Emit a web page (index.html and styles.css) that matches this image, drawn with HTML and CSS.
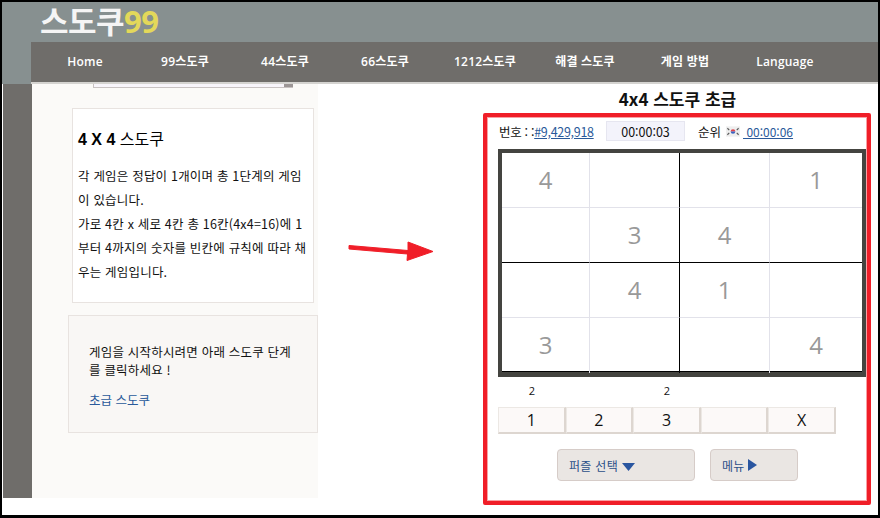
FILE: index.html
```html
<!DOCTYPE html>
<html lang="ko">
<head>
  <meta charset="UTF-8" />
  <title>4x4 스도쿠 초급</title>
  <link rel="stylesheet" href="styles.css">
</head>
<body>
  <div class="frame">
    <header>
      <div class="logo">스도쿠<span>99</span></div>
    </header>
    <nav>
      <a href="#">Home</a>
      <a href="#">99스도쿠</a>
      <a href="#">44스도쿠</a>
      <a href="#">66스도쿠</a>
      <a href="#">1212스도쿠</a>
      <a href="#">해결 스도쿠</a>
      <a href="#">게임 방법</a>
      <a href="#">Language</a>
    </nav>

    <div class="page">
      <div class="gutter"></div>

      <!-- Left panel -->
      <aside class="panel">
        <div class="search-stub"><i></i></div>
        <div class="intro">
          <h3><b>4 X 4</b> 스도쿠</h3>
          <p>각 게임은 정답이 1개이며 총 1단계의 게임이 있습니다.<br>가로 4칸 x 세로 4칸 총 16칸(4x4=16)에 1부터 4까지의 숫자를 빈칸에 규칙에 따라 채우는 게임입니다.</p>
        </div>
        <div class="start">
          <p>게임을 시작하시려면 아래 스도쿠 단계를 클릭하세요 !</p>
          <a href="#">초급 스도쿠</a>
        </div>
      </aside>

      <!-- Game -->
      <main class="game">
        <h2>4x4 스도쿠 초급</h2>
        <div class="game-box">
          <div class="info">
            <span class="num">번호 : :<a href="#">#9,429,918</a></span>
            <span class="timer">00:00:03</span>
            <span class="rank">순위
              <svg class="flag" width="14" height="11" viewBox="0 0 15 11">
                <rect width="15" height="11" fill="#eeeeee"/>
                <path d="M5 5.500a2.500 2.500 0 0 1 5 0z" fill="#e0404a"/>
                <path d="M5 5.500a2.500 2.500 0 0 0 5 0z" fill="#3a62c0"/>
                <path d="M1.500 2l2 2M1.500 9l2-2M13.500 2l-2 2M13.500 9l-2-2" stroke="#555" stroke-width="1.200"/>
              </svg><a href="#">&nbsp;00:00:06</a></span>
          </div>

          <div class="board">
            <div class="cell">4</div><div class="cell mid"></div><div class="cell"></div><div class="cell">1</div>
            <div class="cell row2"></div><div class="cell mid row2">3</div><div class="cell row2">4</div><div class="cell row2"></div>
            <div class="cell"></div><div class="cell mid">4</div><div class="cell">1</div><div class="cell"></div>
            <div class="cell row2">3</div><div class="cell mid row2"></div><div class="cell row2"></div><div class="cell row2">4</div>
          </div>

          <div class="hints">
            <span>2</span><span></span><span>2</span><span></span><span></span>
          </div>
          <div class="pad">
            <button>1</button><button>2</button><button>3</button><button></button><button>X</button>
          </div>

          <div class="actions">
            <button class="puzzle">퍼즐 선택 <svg width="13" height="9" viewBox="0 0 13 9"><path d="M0 1h13L6.500 9z" fill="#2a56a0"/></svg></button>
            <button class="menu">메뉴 <svg width="9" height="12" viewBox="0 0 9 12"><path d="M0 0l9 6-9 6z" fill="#2a56a0"/></svg></button>
          </div>
        </div>
      </main>
    </div>

    <!-- Annotation arrow -->
    <svg class="arrow" width="90" height="24" viewBox="0 0 90 24">
      <path d="M1 5.500L60 10.500L60 2L85 11.500L59 20.500L59.500 14L1 9z" fill="#f01e28" stroke="#f01e28" stroke-linejoin="round"/>
    </svg>
  </div>
</body>
</html>
```

FILE: styles.css
```css
* {
  box-sizing: border-box;
}
body {
  margin: 0;
  background: #fff;
  font-family: "Noto Sans CJK KR", "Open Sans", sans-serif;
  font-size: 12.5px;
  color: #111;
}
a {
  color: #2a5a9a;
}
.frame {
  position: relative;
  width: 880px;
  height: 518px;
  overflow: hidden;
  border-style: solid;
  border-color: #000;
  border-width: 2px 2px 3px 2px;
}
header {
  height: 40px;
  background: #879090;
  padding-left: 38px;
}
.logo {
  font-family: "Open Sans", "Noto Sans CJK KR", sans-serif;
  font-size: 31px;
  font-weight: 700;
  line-height: 38px;
  color: #f5f5f5;
  letter-spacing: -0.5px;
}
.logo span {
  color: #e3d85a;
}
nav {
  display: flex;
  height: 42px;
  margin-left: 29px;
  padding-left: 4px;
  background: #6f6d6a;
  border-bottom: 2px solid #d4d3d0;
  position: relative;
}
nav::before {
  content: "";
  position: absolute;
  left: -29px;
  top: 0;
  width: 29px;
  height: 42px;
  background: #879090;
}
nav a {
  width: 100px;
  line-height: 40px;
  text-align: center;
  color: #fff;
  font-family: "Open Sans", "Noto Sans CJK KR", sans-serif;
  font-size: 12px;
  font-weight: 600;
  letter-spacing: 0.2px;
  text-decoration: none;
}
.page {
  display: flex;
  align-items: flex-start;
}
.gutter {
  width: 30px;
  height: 414px;
  margin-left: 1px;
  flex-shrink: 0;
  background: #6f6d6a;
  margin-right: -1px;
}
.panel {
  width: 286px;
  height: 414px;
  flex-shrink: 0;
  background: #fbfaf8;
  padding: 0 0 0 36px;
}
.search-stub {
  width: 200px;
  height: 4px;
  margin-left: 25px;
  background: #f8f5fb;
  border: solid #c8c2c2;
  border-width: 0 1px 1px 1px;
  position: relative;
}
.search-stub i {
  position: absolute;
  right: -1px;
  top: 0;
  width: 9px;
  height: 3px;
  background: #9c9696;
}
.intro {
  width: 242px;
  height: 195px;
  margin: 20px 0 12px 4px;
  padding: 0 5px;
  background: #fff;
  border: 1px solid #e8e3e0;
}
.intro h3 {
  margin: 17px 0 0;
  font-size: 16px;
  font-weight: 400;
  line-height: 24px;
  color: #000;
}
.intro h3 b {
  font-family: "Liberation Sans", sans-serif;
  font-weight: 700;
}
.intro p {
  margin: 12px 0 0;
  line-height: 24px;
  word-break: break-all;
  letter-spacing: 0.2px;
}
.start {
  width: 250px;
  height: 118px;
  padding: 27px 20px 0;
  background: #f9f7f5;
  border: 1px solid #e8e3e0;
}
.start p {
  margin: 0 0 11px;
  line-height: 18px;
  word-break: break-all;
  letter-spacing: 0.2px;
}
.start a {
  text-decoration: none;
  line-height: 18px;
}
.game {
  width: 388px;
  margin-left: 165px;
  flex-shrink: 0;
}
.game h2 {
  margin: 4px 0 0;
  padding-left: 1px;
  font-size: 17px;
  line-height: 22px;
  font-weight: 700;
  text-align: center;
  color: #111;
}
.game-box {
  width: 388px;
  height: 392px;
  margin-top: 3px;
  padding: 1px 0 0 11px;
  border: 4px solid #f01e28;
  border-radius: 2px;
  outline: 1px solid #f9a0a4;
  outline-offset: -5px;
}
.info {
  display: flex;
  align-items: center;
  height: 26px;
  padding-left: 1px;
}
.num {
  width: 107px;
  letter-spacing: -0.3px;
}
.timer {
  width: 79px;
  height: 20px;
  line-height: 20px;
  text-align: center;
  background: #f3f3fb;
  border: 1px solid #e6e6f0;
}
.rank {
  margin-left: 13px;
  display: flex;
  align-items: center;
  gap: 3px;
}
.flag {
  margin-left: 2px;
}
.rank a {
  font-size: 12px;
  white-space: pre;
}
.board {
  display: grid;
  grid-template-columns: 88px 90px 90px 92px;
  grid-auto-rows: 55px;
  width: 368px;
  height: 228px;
  margin-top: 5px;
  background: #fff;
  border: solid #444440;
  border-width: 4px 4px 5px 4px;
  box-shadow: inset 0 -1px 0 #000;
}
.cell {
  border-right: 1px solid #e2e2ea;
  border-bottom: 1px solid #e2e2ea;
  font-family: "Open Sans", sans-serif;
  font-size: 24px;
  line-height: 54px;
  text-align: center;
  color: #999;
}
.cell.mid {
  border-right: 1px solid #000;
}
.cell:nth-child(4n) {
  border-right: 0;
}
.cell.row2 {
  border-bottom-color: #000;
}
.cell:nth-child(n+13) {
  border-bottom: 0;
}
.hints {
  display: flex;
  height: 30px;
  padding-top: 6px;
}
.hints span {
  width: 67.6px;
  text-align: center;
  font-family: "Open Sans", sans-serif;
  font-size: 11px;
  line-height: 16px;
}
.pad {
  display: flex;
}
.pad button {
  width: 67.6px;
  height: 27px;
  padding: 0;
  background: #fcf9f8;
  border: solid #ddd6d0;
  border-width: 1px 2px 2px 1px;
  border-top-color: #ece8e4;
  border-left-color: #ece8e4;
  font-family: "Open Sans", sans-serif;
  font-size: 16px;
  color: #111;
}
.actions {
  display: flex;
  gap: 15px;
  margin-top: 15px;
  padding-left: 59px;
}
.actions button {
  height: 32px;
  padding: 0 0 0 11px;
  text-align: left;
  background: #eae6e3;
  border: 1px solid #d6ccc8;
  border-radius: 4px;
  font-family: "Noto Sans CJK KR", sans-serif;
  font-size: 12px;
  letter-spacing: 0.3px;
  color: #2a4f88;
}
.puzzle {
  width: 138px;
}
.menu {
  width: 88px;
}
.arrow {
  position: absolute;
  left: 346px;
  top: 238px;
}
```
